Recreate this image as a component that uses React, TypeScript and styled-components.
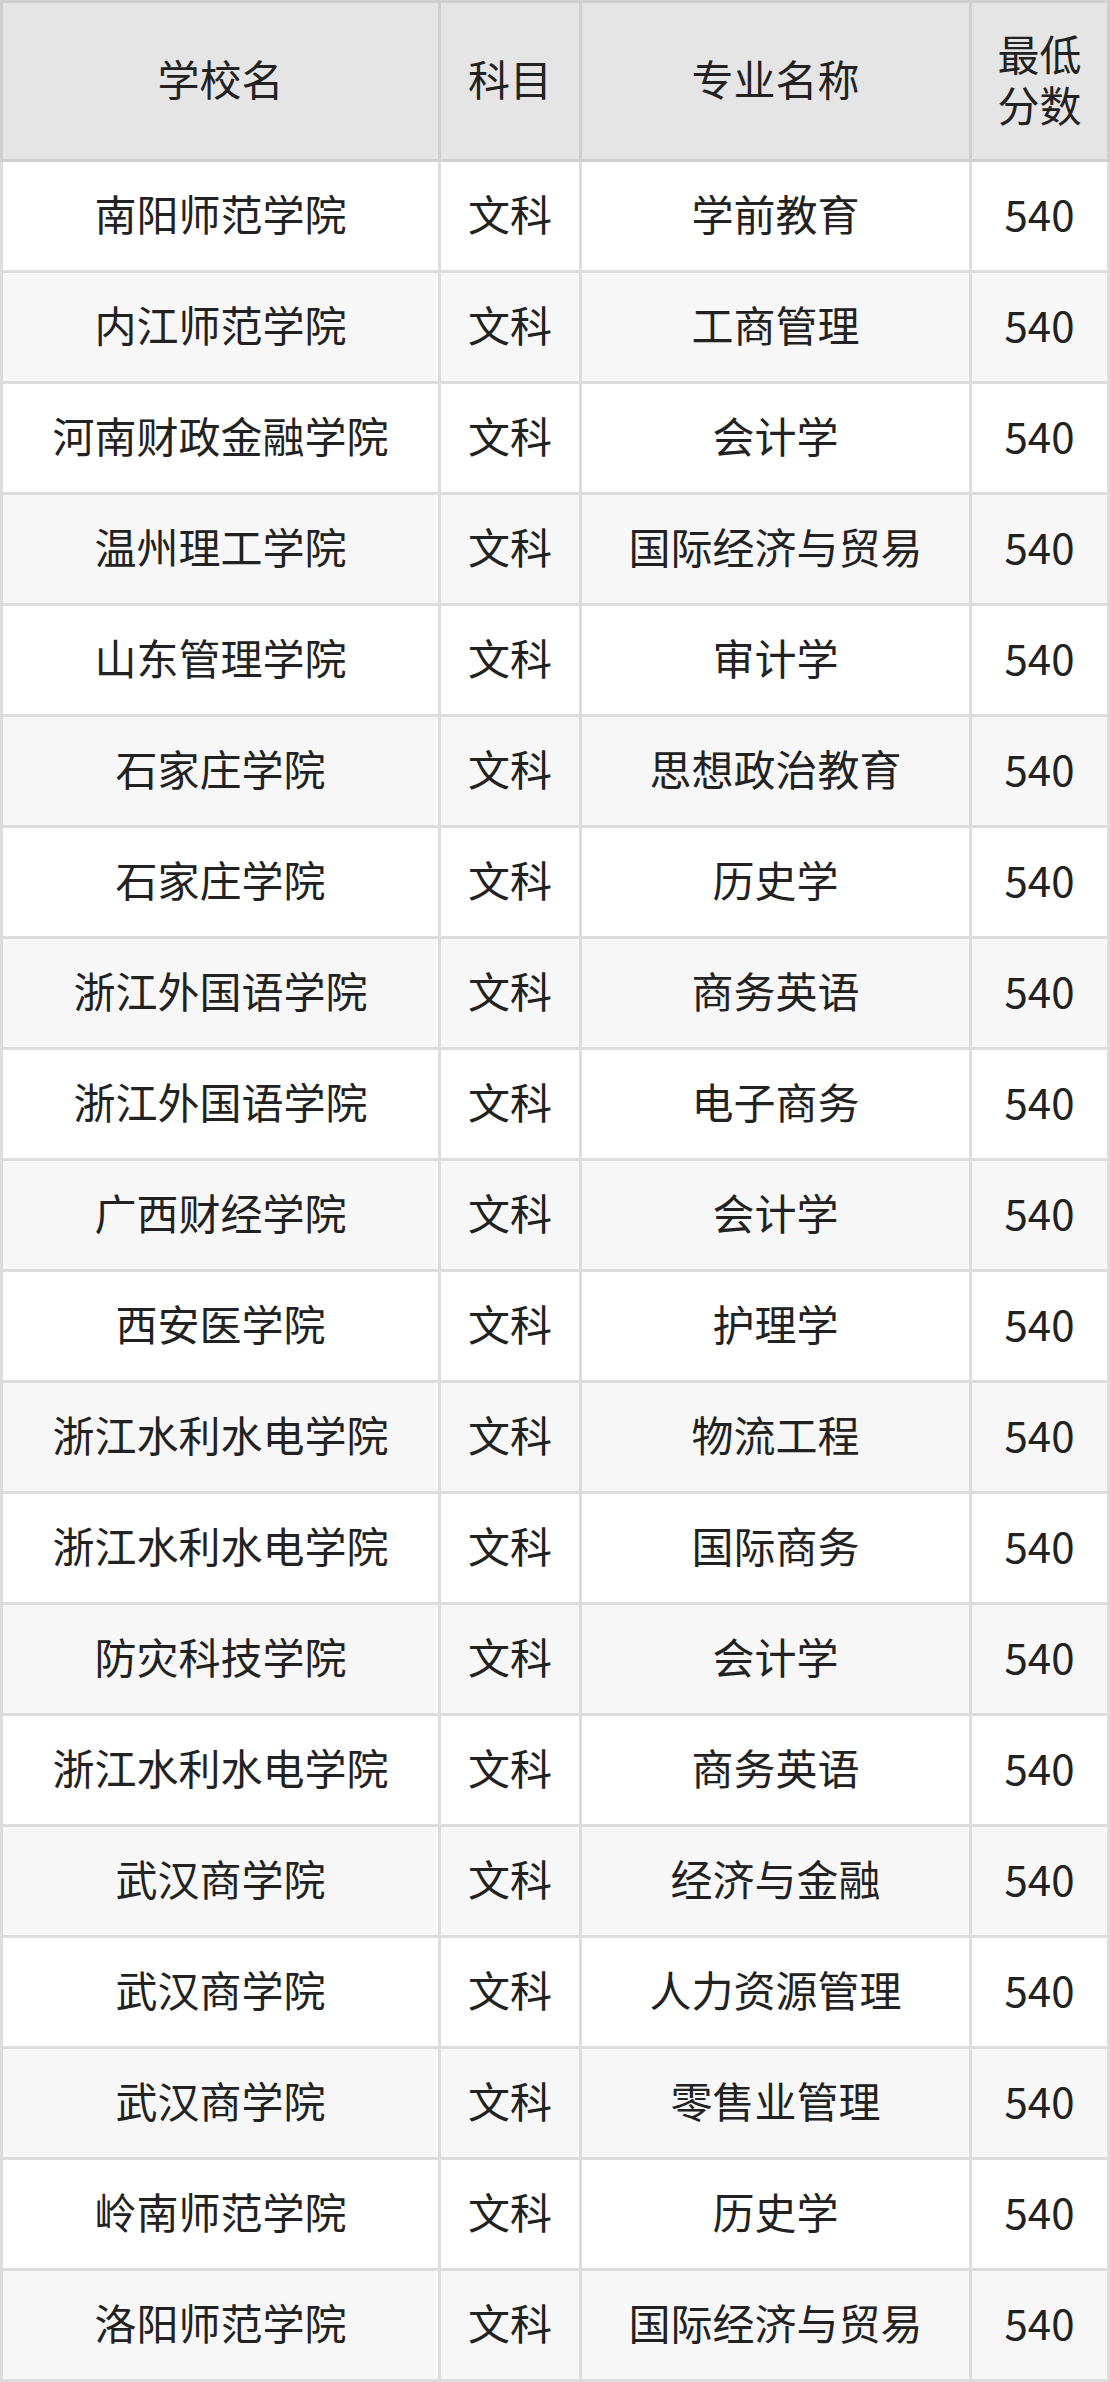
import React from "react";
import styled, { createGlobalStyle } from "styled-components";

const GlobalStyle = createGlobalStyle`
  html, body {
    margin: 0;
    padding: 0;
    background: #ffffff;
  }
  body {
    font-family: "Noto Sans CJK SC", "Noto Sans", sans-serif;
    color: #222222;
  }
`;

const Grid = styled.div`
  display: grid;
  grid-template-columns: 441px 141px 390px 138px;
  grid-template-rows: 162px;
  grid-auto-rows: 111px;
  width: 1110px;
`;

const BaseCell = styled.div<{ $first?: boolean }>`
  box-sizing: border-box;
  display: flex;
  align-items: center;
  justify-content: center;
  text-align: center;
  padding: 0 12px 5px;
  font-size: 42px;
  line-height: 1.2;
  font-family: "Noto Sans CJK SC", "Noto Sans", sans-serif;
  color: #222222;
`;

const HeaderCell = styled(BaseCell)`
  background: #e5e5e5;
  border-top: 3px solid #d0d0d0;
  border-bottom: 3px solid #d0d0d0;
  border-right: 3px solid #d0d0d0;
  border-left: ${(p) => (p.$first ? "3px solid #d0d0d0" : "none")};
`;

const Cell = styled(BaseCell)<{ $striped: boolean }>`
  background: ${(p) => (p.$striped ? "#f7f7f7" : "#ffffff")};
  border-bottom: 3px solid #dddddd;
  border-right: 3px solid #dddddd;
  border-left: ${(p) => (p.$first ? "3px solid #dddddd" : "none")};
`;

const headers = ["学校名", "科目", "专业名称", "最低分数"];

const rows: [string, string, string, string][] = [
  ["南阳师范学院", "文科", "学前教育", "540"],
  ["内江师范学院", "文科", "工商管理", "540"],
  ["河南财政金融学院", "文科", "会计学", "540"],
  ["温州理工学院", "文科", "国际经济与贸易", "540"],
  ["山东管理学院", "文科", "审计学", "540"],
  ["石家庄学院", "文科", "思想政治教育", "540"],
  ["石家庄学院", "文科", "历史学", "540"],
  ["浙江外国语学院", "文科", "商务英语", "540"],
  ["浙江外国语学院", "文科", "电子商务", "540"],
  ["广西财经学院", "文科", "会计学", "540"],
  ["西安医学院", "文科", "护理学", "540"],
  ["浙江水利水电学院", "文科", "物流工程", "540"],
  ["浙江水利水电学院", "文科", "国际商务", "540"],
  ["防灾科技学院", "文科", "会计学", "540"],
  ["浙江水利水电学院", "文科", "商务英语", "540"],
  ["武汉商学院", "文科", "经济与金融", "540"],
  ["武汉商学院", "文科", "人力资源管理", "540"],
  ["武汉商学院", "文科", "零售业管理", "540"],
  ["岭南师范学院", "文科", "历史学", "540"],
  ["洛阳师范学院", "文科", "国际经济与贸易", "540"],
];

export default function App() {
  return (
    <>
      <GlobalStyle />
      <Grid role="table">
        {headers.map((h, i) => (
          <HeaderCell key={h} role="columnheader" $first={i === 0}>
            {h}
          </HeaderCell>
        ))}
        {rows.map((r, ri) =>
          r.map((c, ci) => (
            <Cell key={`${ri}-${ci}`} role="cell" $first={ci === 0} $striped={ri % 2 === 1}>
              {c}
            </Cell>
          ))
        )}
      </Grid>
    </>
  );
}
